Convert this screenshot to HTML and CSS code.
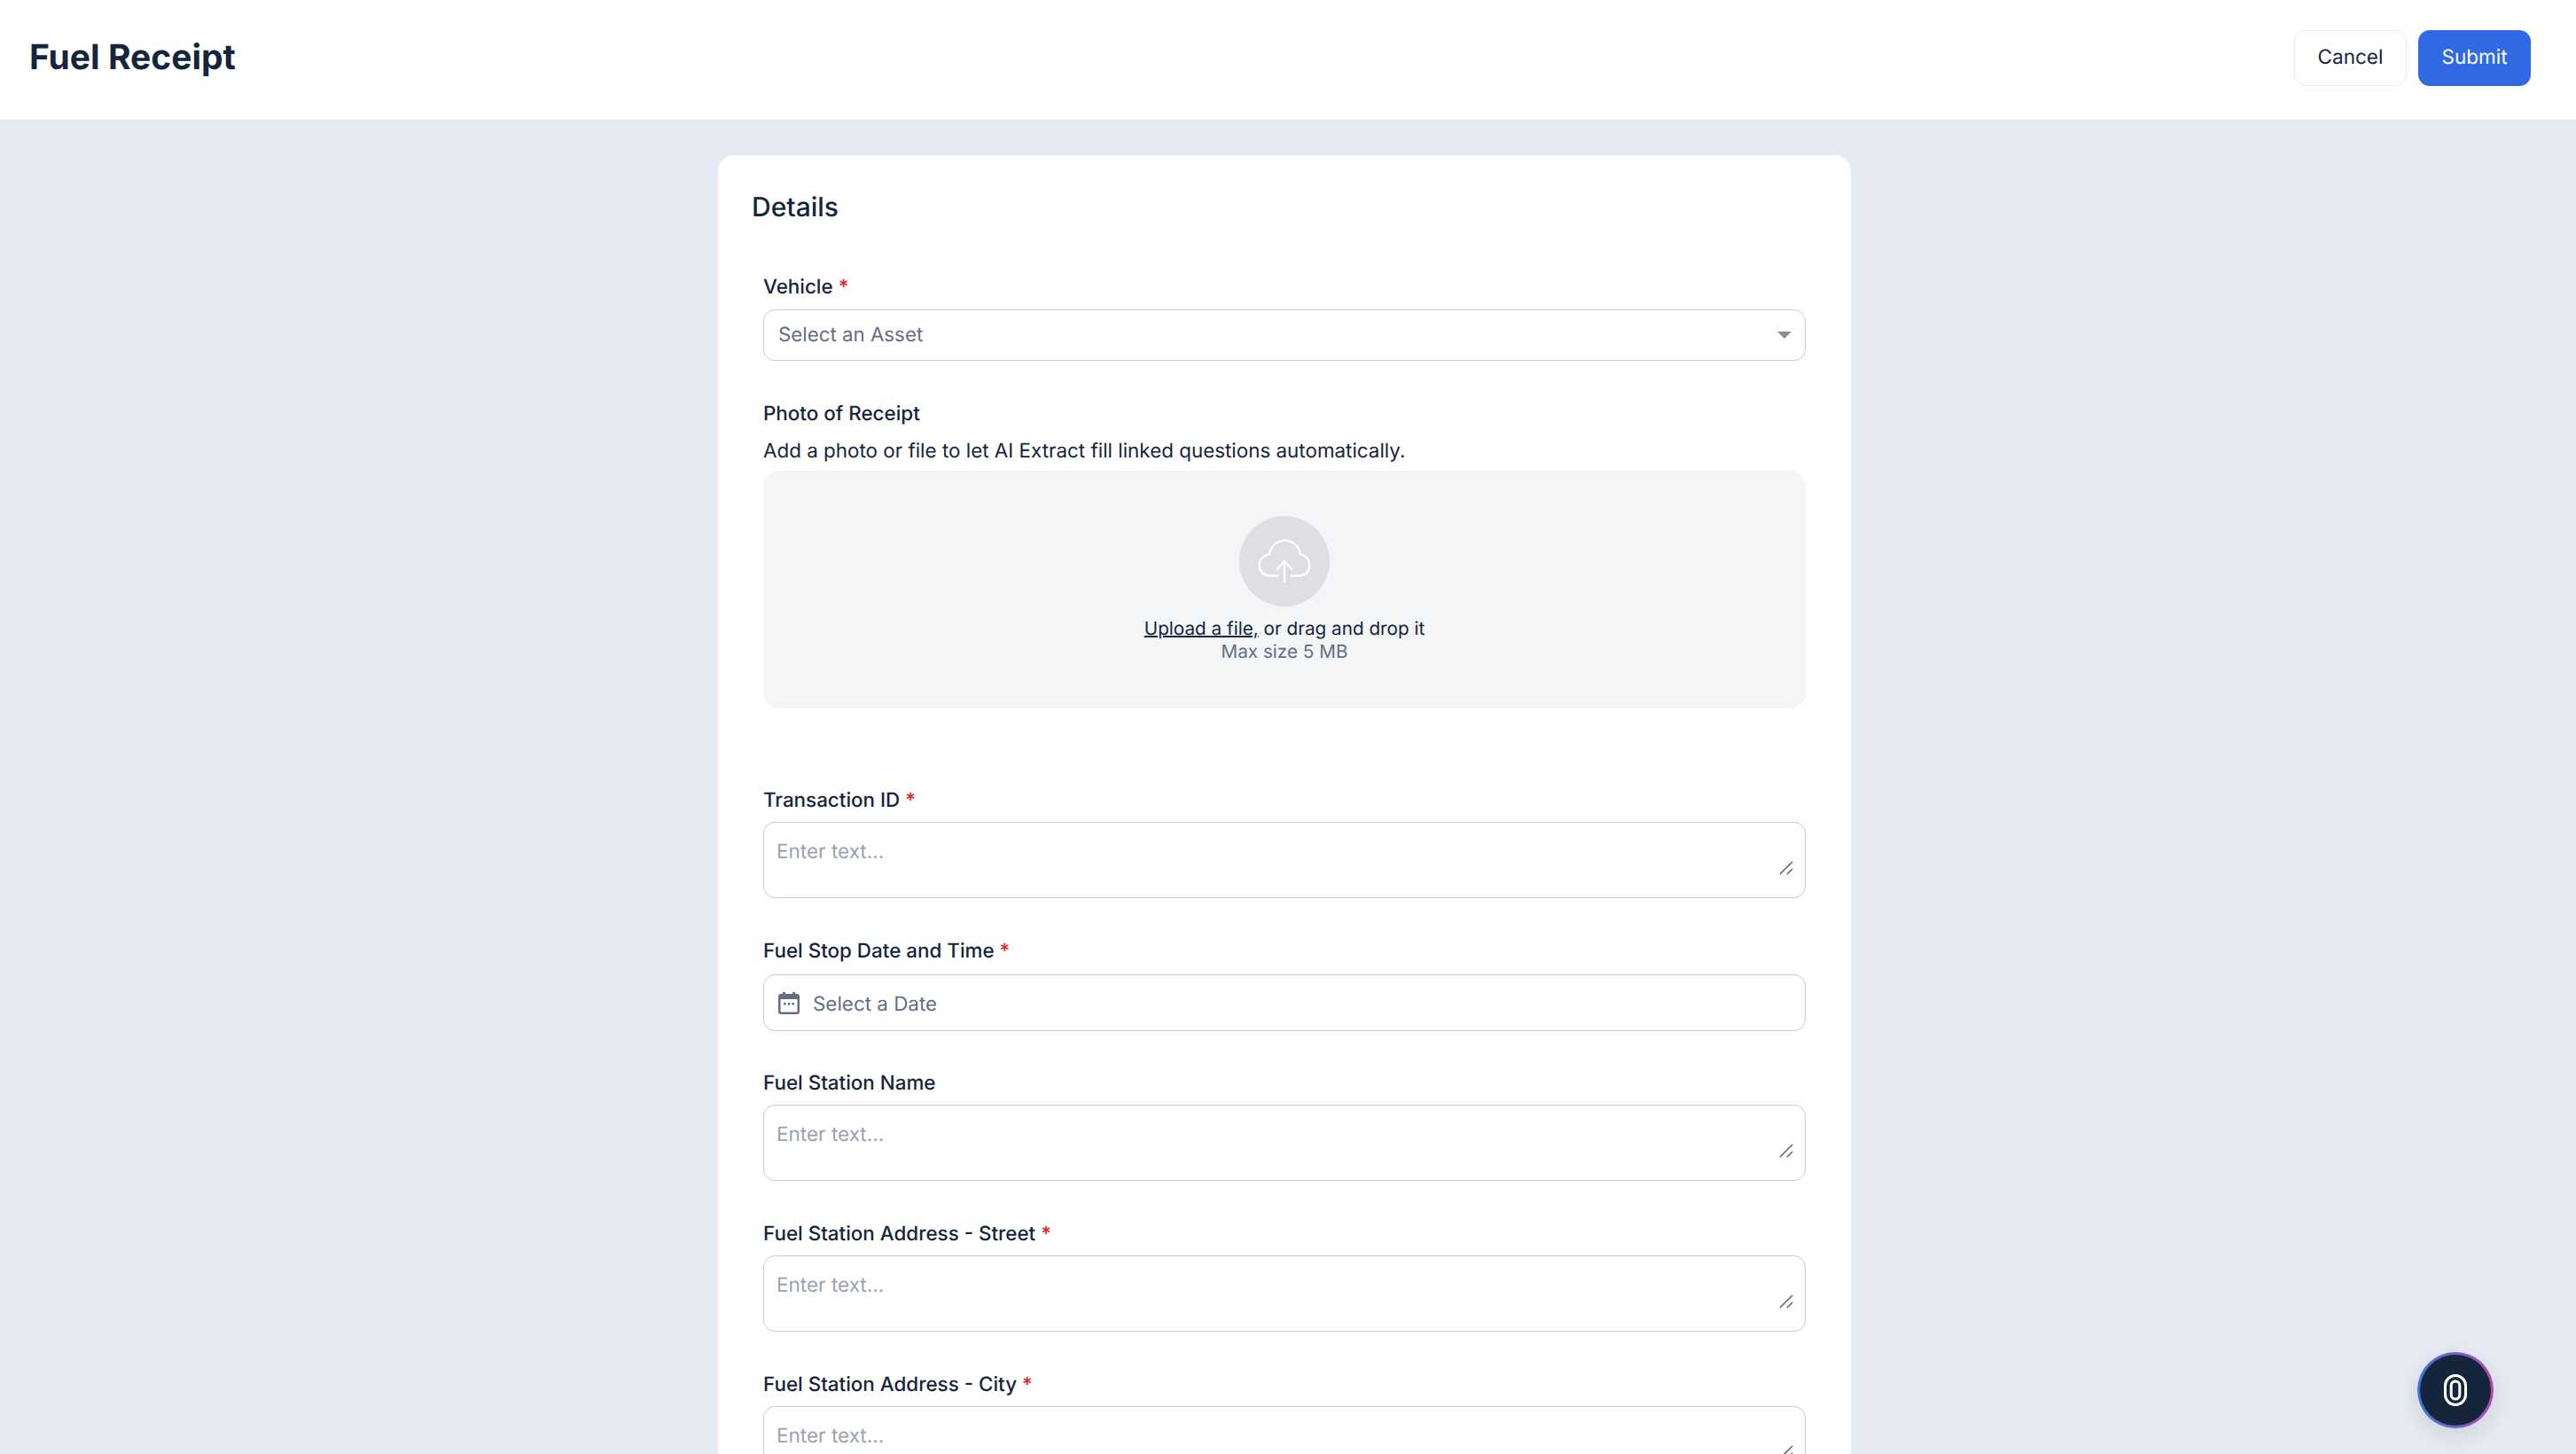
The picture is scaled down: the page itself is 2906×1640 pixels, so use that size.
FILE: index.html
```html
<!DOCTYPE html>
<html lang="en">
<head>
    <meta charset="UTF-8">
    <title>Fuel Receipt</title>
    <link rel="stylesheet" href="styles.css">
</head>
<body>
    <header class="top-bar">
        <h1>Fuel Receipt</h1>
        <div class="actions">
            <button class="btn btn-cancel" type="button">Cancel</button>
            <button class="btn btn-submit" type="button">Submit</button>
        </div>
    </header>

    <main class="content">
        <section class="card">
            <h2>Details</h2>

            <div class="field select-field">
                <label>Vehicle <span class="req">*</span></label>
                <div class="select-box">
                    <span>Select an Asset</span>
                    <span class="caret"></span>
                </div>
            </div>

            <div class="field photo-field">
                <label>Photo of Receipt</label>
                <p class="hint">Add a photo or file to let AI Extract fill linked questions automatically.</p>
                <div class="dropzone">
                    <div class="upload-circle">
                        <svg width="60" height="52" viewBox="0 0 60 52" fill="none" stroke="#fff" stroke-width="2.3" stroke-linecap="round" stroke-linejoin="round">
                            <path d="M22.700 42.300H12.700a11 11 0 0 1-11-11C1.700 24 7 18.500 13.300 18A17.300 17.300 0 0 1 47.700 18C54 18.500 58.300 24.500 58.300 31.300a11 11 0 0 1-11 11H37.700"/>
                            <path d="M30 49.700V26M21.700 34.700L30 26l8.300 8.700"/>
                        </svg>
                    </div>
                    <div class="upload-text"><u>Upload a file,</u> or drag and drop it</div>
                    <div class="upload-max">Max size 5 MB</div>
                </div>
            </div>

            <div class="field">
                <label>Transaction ID <span class="req">*</span></label>
                <div class="area-wrap">
                    <textarea placeholder="Enter text..."></textarea>
                    <svg class="grip" width="16" height="16" viewBox="0 0 16 16" stroke="#666" stroke-width="1.6"><path d="M1 15L15 1M9 15l6-6"/></svg>
                </div>
            </div>

            <div class="field">
                <label>Fuel Stop Date and Time <span class="req">*</span></label>
                <div class="date-box">
                    <svg width="24" height="25" viewBox="0 0 24 25" fill="#636e85">
                        <path d="M5 0h3v2h8V0h3v2h2a3 3 0 0 1 3 3v17a3 3 0 0 1-3 3H3a3 3 0 0 1-3-3V5a3 3 0 0 1 3-3h2zM2.500 8v14c0 .3.200.5.500.5h18c.3 0 .5-.2.500-.5V8z"/>
                        <rect x="6" y="12" width="2.500" height="2.500"/>
                        <rect x="10.750" y="12" width="2.500" height="2.500"/>
                        <rect x="15.500" y="12" width="2.500" height="2.500"/>
                    </svg>
                    <span>Select a Date</span>
                </div>
            </div>

            <div class="field">
                <label>Fuel Station Name</label>
                <div class="area-wrap">
                    <textarea placeholder="Enter text..."></textarea>
                    <svg class="grip" width="16" height="16" viewBox="0 0 16 16" stroke="#666" stroke-width="1.6"><path d="M1 15L15 1M9 15l6-6"/></svg>
                </div>
            </div>

            <div class="field">
                <label>Fuel Station Address - Street <span class="req">*</span></label>
                <div class="area-wrap">
                    <textarea placeholder="Enter text..."></textarea>
                    <svg class="grip" width="16" height="16" viewBox="0 0 16 16" stroke="#666" stroke-width="1.6"><path d="M1 15L15 1M9 15l6-6"/></svg>
                </div>
            </div>

            <div class="field">
                <label>Fuel Station Address - City <span class="req">*</span></label>
                <div class="area-wrap">
                    <textarea placeholder="Enter text..."></textarea>
                    <svg class="grip" width="16" height="16" viewBox="0 0 16 16" stroke="#666" stroke-width="1.6"><path d="M1 15L15 1M9 15l6-6"/></svg>
                </div>
            </div>
        </section>
    </main>

    <button class="fab" type="button">
        <span class="fab-inner">
            <svg width="28" height="36" viewBox="0 0 28 36" fill="none" stroke="#fff" stroke-width="3">
                <rect x="2.500" y="1.500" width="23" height="33" rx="11.500"/>
                <rect x="9.200" y="8" width="9.600" height="20" rx="4.800"/>
            </svg>
        </span>
    </button>
</body>
</html>
```

FILE: styles.css
```css
* {
    box-sizing: border-box;
}
html, body {
    height: 100%;
}
body {
    margin: 0;
    height: 1640px;
    overflow: hidden;
    background-color: #e6eaf2;
    font-family: Inter, "Noto Sans", sans-serif;
    color: #14253d;
    text-rendering: geometricPrecision;
}
.top-bar {
    display: flex;
    align-items: center;
    justify-content: space-between;
    height: 135px;
    padding: 0 51px 5px 33px;
    background: #fff;
    box-shadow: 0 1px 3px rgba(20, 37, 61, 0.03);
}
.top-bar h1 {
    margin: 0 0 2px;
    font-size: 39px;
    font-weight: 700;
}
.actions {
    display: flex;
    gap: 13px;
}
.btn {
    width: 127px;
    height: 63px;
    padding-bottom: 3px;
    border-radius: 13px;
    font-family: inherit;
    font-size: 22.500px;
    text-rendering: geometricPrecision;
}
.btn-cancel {
    background: #fff;
    border: 1px solid #e8eaee;
    color: #14253d;
}
.btn-submit {
    background: #2f69e3;
    border: none;
    color: #fff;
}
.content {
    padding: 40px 0 0 810px;
}
.card {
    width: 1278px;
    padding: 37px 51px 40px 51px;
    background: #fff;
    border-radius: 18px;
}
.card h2 {
    margin: 0 0 51px -13px;
    font-size: 30px;
    font-weight: 500;
    line-height: 44px;
}
.field {
    margin-bottom: 43px;
}
.field label {
    display: block;
    height: 32px;
    margin-bottom: 9px;
    font-size: 22.400px;
    font-weight: 500;
    line-height: 34px;
}
.req {
    color: #dc2626;
}
.select-box {
    display: flex;
    align-items: center;
    justify-content: space-between;
    height: 58px;
    margin-top: 10px;
    padding: 0 15px 1px 16px;
    border: 1px solid #c8ccd8;
    border-radius: 13px;
    font-size: 22.300px;
    color: #636e85;
}
.caret {
    width: 0;
    height: 0;
    margin-top: 1px;
    border-left: 8px solid transparent;
    border-right: 8px solid transparent;
    border-top: 8px solid #8f8f8f;
}
.hint {
    margin: 0 0 6px;
    font-size: 22.400px;
    line-height: 32px;
}
.photo-field {
    margin-bottom: 87px;
}
.photo-field label {
    margin-bottom: 11px;
}
.dropzone {
    display: flex;
    flex-direction: column;
    align-items: center;
    height: 268px;
    padding-top: 51px;
    background: #f4f5f7;
    border-radius: 18px;
}
.upload-circle {
    display: flex;
    align-items: center;
    justify-content: center;
    width: 102px;
    height: 102px;
    margin-bottom: 12px;
    border-radius: 50%;
    background: #dedfe2;
}
.upload-text {
    font-size: 20.700px;
    line-height: 26px;
}
.upload-text u {
    text-decoration-thickness: 2px;
}
.upload-max {
    font-size: 20.700px;
    line-height: 26px;
    color: #636e85;
}
.area-wrap {
    position: relative;
    height: 86px;
}
.area-wrap textarea {
    display: block;
    width: 100%;
    height: 86px;
    padding: 18px 14px 16px;
    border: 1px solid #c8ccd8;
    border-radius: 13px;
    outline: none;
    resize: none;
    font-family: inherit;
    font-size: 22.500px;
    line-height: 30px;
    text-rendering: geometricPrecision;
}
.area-wrap textarea::placeholder {
    color: #9aa3b2;
}
.grip {
    position: absolute;
    right: 14px;
    bottom: 26px;
}
.date-box {
    display: flex;
    align-items: center;
    gap: 15px;
    height: 64px;
    margin-top: 11px;
    margin-bottom: -1px;
    padding: 2px 16px 0;
    border: 1px solid #c8ccd8;
    border-radius: 13px;
    font-size: 22.400px;
    color: #636e85;
}
.date-box svg {
    margin-top: -2px;
}
.fab {
    position: absolute;
    left: 2727px;
    top: 1525px;
    width: 86px;
    height: 86px;
    padding: 3px;
    border: none;
    border-radius: 50%;
    background: linear-gradient(90deg, #3f73e0, #b04aa8);
    box-shadow: 0 8px 24px rgba(20, 37, 61, 0.12);
}
.fab-inner {
    display: flex;
    align-items: center;
    justify-content: center;
    width: 100%;
    height: 100%;
    border-radius: 50%;
    background: #15263c;
}
```
